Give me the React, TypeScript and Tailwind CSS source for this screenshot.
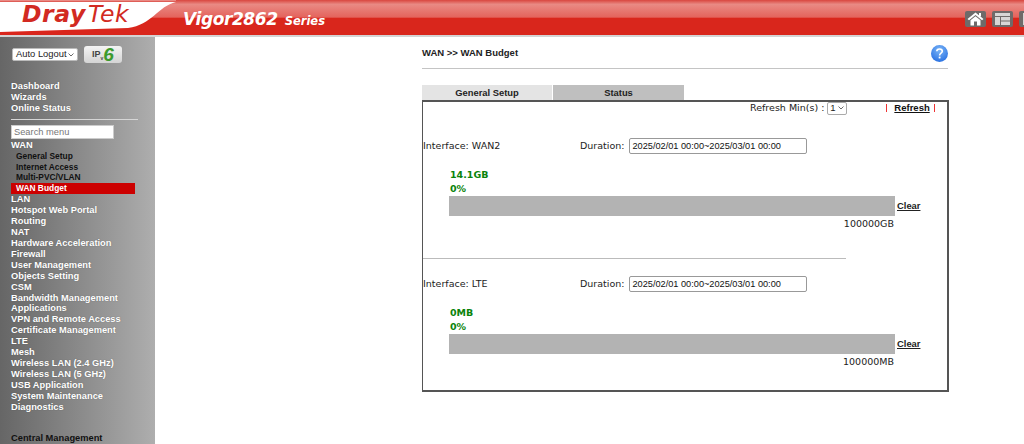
import React from "react";

const sans = "font-['Liberation_Sans',Arial,sans-serif]";
const dejavu = "font-['DejaVu_Sans',Verdana,sans-serif]";

const topMenu = ["Dashboard", "Wizards", "Online Status"];
const wanSub = ["General Setup", "Internet Access", "Multi-PVC/VLAN"];
const menu = [
  "LAN", "Hotspot Web Portal", "Routing", "NAT", "Hardware Acceleration", "Firewall",
  "User Management", "Objects Setting", "CSM", "Bandwidth Management", "Applications",
  "VPN and Remote Access", "Certificate Management", "LTE", "Mesh", "Wireless LAN (2.4 GHz)",
  "Wireless LAN (5 GHz)", "USB Application", "System Maintenance", "Diagnostics",
];

function Swoosh() {
  return (
    <svg className="absolute inset-0" width="1024" height="37" viewBox="0 0 1024 37">
      <defs>
        <linearGradient id="gloss" x1="0" y1="0" x2="0" y2="1">
          <stop offset="0" stopColor="#d9463f" />
          <stop offset="0.12" stopColor="#e98a84" />
          <stop offset="0.48" stopColor="#e4635c" />
          <stop offset="0.5" stopColor="#d9261c" />
          <stop offset="1" stopColor="#d9261c" />
        </linearGradient>
      </defs>
      <rect x="0" y="0" width="1024" height="36" fill="url(#gloss)" />
      <path d="M0 2 H176 C158 6 152 25 128 28 L0 32 Z" fill="#ffffff" />
      <rect x="0" y="0" width="176" height="1" fill="#e98a84" />
      <rect x="0" y="35" width="1024" height="2" fill="#d4d4d4" />
    </svg>
  );
}

function HeaderButton({ children }: { children: React.ReactNode }) {
  return (
    <div className="w-[21px] h-[16px] rounded-[2px] bg-[#6f6a69] flex items-center justify-center shrink-0">
      {children}
    </div>
  );
}

function Header() {
  return (
    <header className={`relative h-[37px] overflow-hidden shrink-0 ${dejavu}`}>
      <Swoosh />
      <div className="relative flex items-start h-full">
        <div className="w-[183px] shrink-0 pl-[22px] mt-[-1px] flex items-baseline italic leading-[30px] text-[#d22a22] tracking-[0.6px]">
          <span className="text-[23.5px] font-bold">Dray</span>
          <span className="text-[23.5px] ml-[2px]">Tek</span>
        </div>
        <div className="mt-[2px] flex items-baseline italic font-bold text-white leading-[34px]">
          <span className="text-[17px] tracking-[-0.4px]">Vigor2862</span>
          <span className="text-[11.5px] ml-[7px]">Series</span>
        </div>
        <div className="ml-auto mr-[-16px] mt-[11px] flex gap-[6px]">
          <HeaderButton>
            <svg width="17" height="14" viewBox="0 0 17 14">
              <path d="M8.5 0.5 L16.5 7 L15 8.3 L8.5 3 L2 8.3 L0.5 7 Z" fill="#fff" />
              <path d="M3.5 8.2 L8.5 4.2 L13.5 8.2 V13.5 H10 V9.5 H7 V13.5 H3.5 Z" fill="#fff" />
              <rect x="12" y="1" width="2" height="3.5" fill="#fff" />
            </svg>
          </HeaderButton>
          <HeaderButton>
            <svg width="17" height="14" viewBox="0 0 17 14">
              <rect x="1" y="1" width="15" height="12" fill="#d8d6d5" />
              <rect x="1" y="4" width="15" height="1" fill="#6f6a69" />
              <rect x="6" y="5" width="1" height="8" fill="#6f6a69" />
              <rect x="7" y="8.5" width="9" height="1" fill="#6f6a69" />
            </svg>
          </HeaderButton>
          <HeaderButton>
            <svg width="17" height="14" viewBox="0 0 17 14">
              <rect x="2" y="1" width="13" height="12" fill="#d8d6d5" />
            </svg>
          </HeaderButton>
        </div>
      </div>
    </header>
  );
}

function Sidebar() {
  const item = "text-[9.3px] leading-[10.9px] font-bold text-white [text-shadow:0_0_1px_rgba(60,60,60,0.6)] whitespace-nowrap";
  return (
    <aside className={`w-[155px] shrink-0 h-[407px] overflow-hidden bg-gradient-to-r from-[#666666] to-[#aeaeae] ${sans}`}>
      <div className="flex items-center pl-[12px] pt-[9px]">
        <div className="w-[66px] h-[13px] bg-white border border-[#bbb] rounded-[2px] flex items-center justify-between pl-[3px] pr-[3px] text-[9.4px] text-[#222] whitespace-nowrap">
          <span>Auto Logout</span>
          <svg width="6" height="4" viewBox="0 0 6 4"><path d="M0.5 0.5 L3 3 L5.5 0.5" fill="none" stroke="#444" strokeWidth="0.8" /></svg>
        </div>
        <div className="ml-[6px] w-[38px] h-[17px] rounded-[3px] bg-gradient-to-b from-[#f4f4f4] to-[#d4d4d4] flex items-center justify-center font-bold text-[#444] leading-none">
          <span className="text-[9px]">IP</span>
          <span className="text-[5px] mt-[7px]">v</span>
          <span className="text-[19px] italic text-[#3c9a2e]">6</span>
        </div>
      </div>
      <nav className="pl-[11px] pt-[18px]">
        {topMenu.map((m) => <div key={m} className={item}>{m}</div>)}
        <div className="w-[127px] h-px bg-[#d6d6d6] mt-[5px]" />
        <div className="mt-[5px] w-[103px] h-[14px] bg-white border border-[#ccc] px-[2px] text-[9.3px] leading-[12px] text-[#777]">Search menu</div>
        <div className={`${item} mt-[1px]`}>WAN</div>
        {wanSub.map((m) => (
          <div key={m} className="pl-[5px] text-[8.4px] leading-[10.9px] font-bold text-[#111] whitespace-nowrap">{m}</div>
        ))}
        <div className="w-[124px] h-[11px] bg-[#cc0000] pl-[5px] text-[8.4px] leading-[11px] font-bold text-white">WAN Budget</div>
        {menu.map((m) => <div key={m} className={item}>{m}</div>)}
        <div className="mt-[21px] text-[9.3px] leading-[10.9px] font-bold text-[#111] whitespace-nowrap">Central Management</div>
      </nav>
    </aside>
  );
}

function Budget({ name, used, limit, top }: { name: string; used: string; limit: string; top: string }) {
  return (
    <section className={top}>
      <div className={`flex items-center h-[16px] text-[9.5px] text-[#222] ${dejavu}`}>
        <span className="w-[157px]">Interface: {name}</span>
        <span>Duration:</span>
        <div className={`ml-[5px] w-[178px] h-[16px] border border-[#999] rounded-[2px] pl-[2px] text-[9.2px] leading-[14px] text-[#111] ${sans}`}>
          2025/02/01 00:00~2025/03/01 00:00
        </div>
      </div>
      <div className={`pl-[27px] mt-[14px] text-[9.5px] font-bold text-[#0a830a] leading-[14px] ${dejavu}`}>
        <div>{used}</div>
        <div>0%</div>
      </div>
      <div className="pl-[26px] flex items-center">
        <div className="w-[446px] h-[20px] bg-[#b3b3b3]" />
        <a className={`ml-[2px] mt-[1px] text-[9.4px] font-bold underline text-[#222] ${sans}`}>Clear</a>
      </div>
      <div className={`w-[471px] text-right text-[9.5px] leading-[14px] mt-[1px] text-[#222] ${dejavu}`}>{limit}</div>
    </section>
  );
}

function Main() {
  return (
    <main className={`flex-1 pl-[267px] pt-[8px] pr-[75px] ${sans}`}>
      <div className="flex items-center justify-between h-[17px] w-[527px]">
        <h1 className="text-[9.5px] font-bold text-[#222]">WAN &gt;&gt; WAN Budget</h1>
        <svg width="17" height="17" viewBox="0 0 17 17" className="mr-px">
          <defs>
            <radialGradient id="help" cx="0.5" cy="0.3" r="0.8">
              <stop offset="0" stopColor="#7cb6f7" />
              <stop offset="1" stopColor="#1f69e0" />
            </radialGradient>
          </defs>
          <circle cx="8.5" cy="8.5" r="8.5" fill="url(#help)" />
          <path d="M5.8 6.3 C5.8 3.2 11.3 3.2 11.3 6.3 C11.3 8.3 8.6 8.2 8.6 10.5" fill="none" stroke="#fff" strokeWidth="1.6" />
          <rect x="7.7" y="11.6" width="1.8" height="1.8" fill="#fff" />
        </svg>
      </div>
      <div className="w-[526px] h-px bg-[#c4c4c4] mt-[6px]" />
      <div className="flex gap-px mt-[16px] w-[527px] h-[15px] text-[9.4px] font-bold text-[#222] leading-[15px] text-center">
        <div className="w-[130px] bg-[#e4e4e4]">General Setup</div>
        <div className="w-[131px] bg-[#bfbfbf]">Status</div>
      </div>
      <div className="w-[527px] h-[292px] border border-[#555] border-t-2 border-l-[1.5px] border-r-2 border-b-2">
        <div className={`flex items-center h-[12px] text-[9.5px] text-[#222] ${dejavu}`}>
          <span className="ml-[327px]">Refresh Min(s) :</span>
          <div className={`ml-[3px] w-[20px] h-[13px] border border-[#aaa] rounded-[2px] flex items-center justify-between px-[2px] ${sans}`}>
            <span>1</span>
            <svg width="6" height="4" viewBox="0 0 6 4"><path d="M0.5 0.5 L3 3 L5.5 0.5" fill="none" stroke="#444" strokeWidth="0.8" /></svg>
          </div>
          <span className="ml-[39px] w-px h-[8px] bg-[#ee3333]" />
          <a className={`ml-[7px] font-bold underline text-[#111] ${sans}`}>Refresh</a>
          <span className="ml-[4px] w-px h-[8px] bg-[#ee3333]" />
        </div>
        <Budget name="WAN2" used="14.1GB" limit="100000GB" top="mt-[24px]" />
        <div className="w-[423px] h-px bg-[#bbbbbb] mt-[27px]" />
        <Budget name="LTE" used="0MB" limit="100000MB" top="mt-[17px]" />
      </div>
    </main>
  );
}

export default function App() {
  return (
    <div className="w-[1024px] h-[444px] overflow-hidden bg-white flex flex-col">
      <Header />
      <div className="flex">
        <Sidebar />
        <Main />
      </div>
    </div>
  );
}
